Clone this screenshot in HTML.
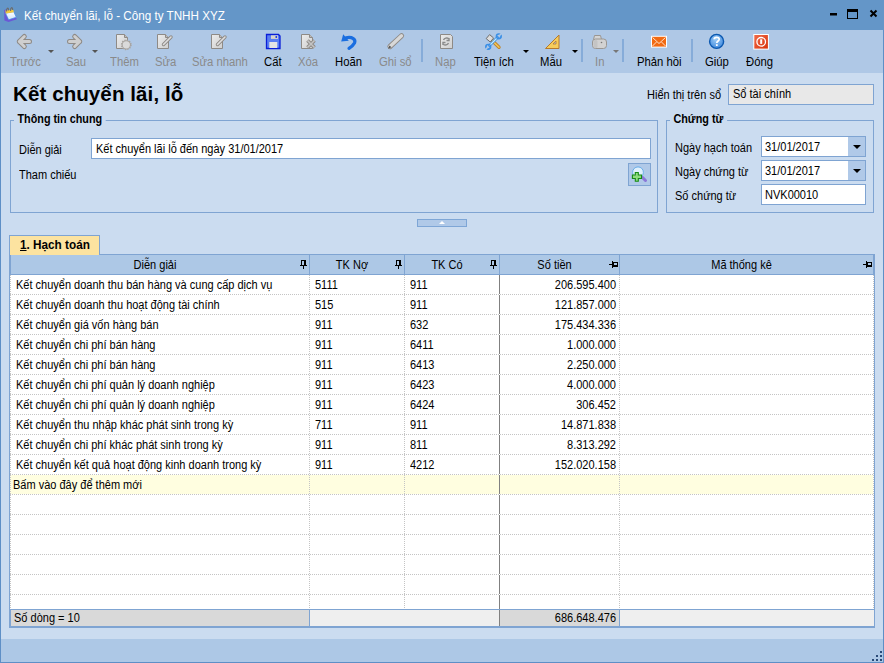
<!DOCTYPE html>
<html><head><meta charset="utf-8">
<style>
*{box-sizing:border-box;margin:0;padding:0}
html,body{width:884px;height:663px;overflow:hidden}
body{position:relative;background:#cbdcf0;font-family:"Liberation Sans",sans-serif;font-size:11px;color:#000}
.a{position:absolute}
.t{position:absolute;white-space:nowrap;line-height:13px;font-size:11px}
.u{position:absolute;white-space:nowrap;line-height:13px;font-size:12px;transform:scaleX(0.917);transform-origin:0 0}
#title{left:0;top:0;width:884px;height:30px;background:#6496c8}
#tb{left:1px;top:30px;width:882px;height:43px;background:#afc8e6}
#wl{left:0;top:30px;width:1px;height:633px;background:#5e8fc6}
#wr{left:883px;top:30px;width:1px;height:633px;background:#5e8fc6}
#wb{left:0;top:662px;width:884px;height:1px;background:#5e8fc6}
#status{left:1px;top:639px;width:882px;height:23px;background:#adc8e6}
.tl{position:absolute;white-space:nowrap;font-size:12px;line-height:14px;top:55px;color:#000;transform:scaleX(0.94);transform-origin:0 0}
.dis{color:#8a8a8a}
.sep{position:absolute;top:39px;width:2px;height:23px;background:#86acd9}
.dd{position:absolute;top:50px;width:0;height:0;border-left:3px solid transparent;border-right:3px solid transparent;border-top:3px solid #000}
.fs{position:absolute;border:1px solid #7fa4d2}
.lg{position:absolute;background:#cbdcf0;font-weight:bold;font-size:12.5px;line-height:14px;padding:0 4px 0 4px;white-space:nowrap;transform:scaleX(0.865);transform-origin:0 0}
.inp{position:absolute;background:#fff;border:1px solid #7fa4d2}
.ddb{position:absolute;background:#b0c9e8}
.ddb:after{content:"";position:absolute;left:4.5px;top:8px;border-left:4px solid transparent;border-right:4px solid transparent;border-top:4px solid #000}
#grid{left:9px;top:255px;width:866px;height:372px;background:#fff;border:1px solid #7fa4d2}
.hd{position:absolute;top:0;height:19px;background:#adc8e6;border-right:1px solid #7fa4d2;border-bottom:1px solid #7fa4d2}
.hl{position:absolute;left:0;right:0;top:3px;text-align:center;line-height:13px;white-space:nowrap}
.hr{position:absolute;height:1px;background:repeating-linear-gradient(to right,#c4c4c4 0 1px,transparent 1px 2px)}
.vr{position:absolute;width:1px;background:repeating-linear-gradient(to bottom,#c4c4c4 0 1px,transparent 1px 2px)}
</style></head><body>
<div id="title" class="a"></div>
<div id="tb" class="a"></div>
<div id="status" class="a"></div>
<div id="wl" class="a"></div><div id="wr" class="a"></div><div id="wb" class="a"></div>

<!-- title text -->
<div class="t" style="left:24px;top:9px;color:#fff;font-size:12.5px;line-height:15px;transform:scaleX(0.934);transform-origin:0 0">Kết chuyển lãi, lỗ - Công ty TNHH XYZ</div>

<!-- toolbar labels -->
<div class="tl dis" style="left:10px">Trước</div>
<div class="tl dis" style="left:66px">Sau</div>
<div class="tl dis" style="left:110px">Thêm</div>
<div class="tl dis" style="left:155px">Sửa</div>
<div class="tl dis" style="left:192px">Sửa nhanh</div>
<div class="tl" style="left:264px">Cất</div>
<div class="tl dis" style="left:298px">Xóa</div>
<div class="tl" style="left:335px">Hoãn</div>
<div class="tl dis" style="left:379px">Ghi sổ</div>
<div class="tl dis" style="left:435px">Nạp</div>
<div class="tl" style="left:474px">Tiện ích</div>
<div class="tl" style="left:540px">Mẫu</div>
<div class="tl dis" style="left:595px">In</div>
<div class="tl" style="left:637px">Phản hồi</div>
<div class="tl" style="left:705px">Giúp</div>
<div class="tl" style="left:746px">Đóng</div>
<div class="dd" style="left:48px;border-top-color:#555"></div>
<div class="dd" style="left:92px;border-top-color:#555"></div>
<div class="dd" style="left:523px"></div>
<div class="dd" style="left:572px"></div>
<div class="dd" style="left:613px;border-top-color:#777"></div>
<div class="sep" style="left:421px"></div>
<div class="sep" style="left:581px"></div>
<div class="sep" style="left:622px"></div>
<div class="sep" style="left:691px"></div>

<!-- heading -->
<div class="t" style="left:13px;top:82px;font-size:20.5px;line-height:23px;font-weight:bold;letter-spacing:0.1px">Kết chuyển lãi, lỗ</div>
<div class="u" style="left:647px;top:89px">Hiển thị trên sổ</div>
<div class="a" style="left:728px;top:84px;width:146px;height:21px;background:#e8e8e8;border:1px solid #7fa4d2"></div>
<div class="u" style="left:733px;top:88px">Sổ tài chính</div>

<!-- fieldset 1 -->
<div class="fs" style="left:10px;top:120px;width:648px;height:93px"></div>
<div class="lg" style="left:13.5px;top:112px">Thông tin chung</div>
<div class="u" style="left:19px;top:144px">Diễn giải</div>
<div class="u" style="left:19px;top:169px">Tham chiếu</div>
<div class="inp" style="left:91px;top:138px;width:560px;height:21px"></div>
<div class="u" style="left:96px;top:143px">Kết chuyển lãi lỗ đến ngày 31/01/2017</div>
<div class="a" style="left:628px;top:163px;width:23px;height:23px;background:#b0c9e8;border:1px solid #7fa4d2"></div>

<!-- fieldset 2 -->
<div class="fs" style="left:666px;top:120px;width:208px;height:93px"></div>
<div class="lg" style="left:669.5px;top:112px">Chứng từ</div>
<div class="u" style="left:675px;top:142px">Ngày hạch toán</div>
<div class="u" style="left:675px;top:166px">Ngày chứng từ</div>
<div class="u" style="left:675px;top:190px">Số chứng từ</div>
<div class="inp" style="left:761px;top:136px;width:105px;height:21px"></div>
<div class="ddb" style="left:848px;top:137px;width:17px;height:19px"></div>
<div class="u" style="left:765px;top:141px">31/01/2017</div>
<div class="inp" style="left:761px;top:160px;width:105px;height:21px"></div>
<div class="ddb" style="left:848px;top:161px;width:17px;height:19px"></div>
<div class="u" style="left:765px;top:165px">31/01/2017</div>
<div class="inp" style="left:761px;top:184px;width:105px;height:21px"></div>
<div class="u" style="left:765px;top:189px">NVK00010</div>

<!-- splitter -->
<div class="a" style="left:417px;top:219px;width:50px;height:8px;background:#b0c9e8;border:1px solid #7ea6d6"></div>
<div class="a" style="left:438.5px;top:221px;width:0;height:0;border-left:3px solid transparent;border-right:3px solid transparent;border-bottom:3px solid #fff"></div>

<!-- tab -->



<div class="a" style="left:9px;top:254px;width:866px;height:373px;background:#fff;border:1px solid #7fa4d2"></div>
<div class="a" style="left:10px;top:255px;width:864px;height:19px;background:#adc8e6"></div>
<div class="a" style="left:10px;top:274px;width:864px;height:1px;background:#7fa4d2"></div>
<div class="a" style="left:10px;top:255px;width:1px;height:19px;background:#7fa4d2"></div>
<div class="a" style="left:309px;top:255px;width:1px;height:19px;background:#7fa4d2"></div>
<div class="u" style="left:10px;width:290px;top:259px;text-align:center;transform-origin:50% 0">Diễn giải</div>
<div class="a" style="left:404px;top:255px;width:1px;height:19px;background:#7fa4d2"></div>
<div class="u" style="left:309px;width:86px;top:259px;text-align:center;transform-origin:50% 0">TK Nợ</div>
<div class="a" style="left:499px;top:255px;width:1px;height:19px;background:#7fa4d2"></div>
<div class="u" style="left:404px;width:86px;top:259px;text-align:center;transform-origin:50% 0">TK Có</div>
<div class="a" style="left:619px;top:255px;width:1px;height:19px;background:#7fa4d2"></div>
<div class="u" style="left:499px;width:111px;top:259px;text-align:center;transform-origin:50% 0">Số tiền</div>
<div class="a" style="left:873px;top:255px;width:1px;height:19px;background:#7fa4d2"></div>
<div class="u" style="left:619px;width:245px;top:259px;text-align:center;transform-origin:50% 0">Mã thống kê</div>
<div class="u" style="left:16px;top:279px;">Kết chuyển doanh thu bán hàng và cung cấp dịch vụ</div>
<div class="u" style="left:315px;top:279px;">5111</div>
<div class="u" style="left:410px;top:279px;">911</div>
<div class="u" style="left:499px;width:117px;top:279px;text-align:right;transform-origin:100% 0">206.595.400</div>
<div class="u" style="left:16px;top:299px;">Kết chuyển doanh thu hoạt động tài chính</div>
<div class="u" style="left:315px;top:299px;">515</div>
<div class="u" style="left:410px;top:299px;">911</div>
<div class="u" style="left:499px;width:117px;top:299px;text-align:right;transform-origin:100% 0">121.857.000</div>
<div class="u" style="left:16px;top:319px;">Kết chuyển giá vốn hàng bán</div>
<div class="u" style="left:315px;top:319px;">911</div>
<div class="u" style="left:410px;top:319px;">632</div>
<div class="u" style="left:499px;width:117px;top:319px;text-align:right;transform-origin:100% 0">175.434.336</div>
<div class="u" style="left:16px;top:339px;">Kết chuyển chi phí bán hàng</div>
<div class="u" style="left:315px;top:339px;">911</div>
<div class="u" style="left:410px;top:339px;">6411</div>
<div class="u" style="left:499px;width:117px;top:339px;text-align:right;transform-origin:100% 0">1.000.000</div>
<div class="u" style="left:16px;top:359px;">Kết chuyển chi phí bán hàng</div>
<div class="u" style="left:315px;top:359px;">911</div>
<div class="u" style="left:410px;top:359px;">6413</div>
<div class="u" style="left:499px;width:117px;top:359px;text-align:right;transform-origin:100% 0">2.250.000</div>
<div class="u" style="left:16px;top:379px;">Kết chuyển chi phí quản lý doanh nghiệp</div>
<div class="u" style="left:315px;top:379px;">911</div>
<div class="u" style="left:410px;top:379px;">6423</div>
<div class="u" style="left:499px;width:117px;top:379px;text-align:right;transform-origin:100% 0">4.000.000</div>
<div class="u" style="left:16px;top:399px;">Kết chuyển chi phí quản lý doanh nghiệp</div>
<div class="u" style="left:315px;top:399px;">911</div>
<div class="u" style="left:410px;top:399px;">6424</div>
<div class="u" style="left:499px;width:117px;top:399px;text-align:right;transform-origin:100% 0">306.452</div>
<div class="u" style="left:16px;top:419px;">Kết chuyển thu nhập khác phát sinh trong kỳ</div>
<div class="u" style="left:315px;top:419px;">711</div>
<div class="u" style="left:410px;top:419px;">911</div>
<div class="u" style="left:499px;width:117px;top:419px;text-align:right;transform-origin:100% 0">14.871.838</div>
<div class="u" style="left:16px;top:439px;">Kết chuyển chi phí khác phát sinh trong kỳ</div>
<div class="u" style="left:315px;top:439px;">911</div>
<div class="u" style="left:410px;top:439px;">811</div>
<div class="u" style="left:499px;width:117px;top:439px;text-align:right;transform-origin:100% 0">8.313.292</div>
<div class="u" style="left:16px;top:459px;">Kết chuyển kết quả hoạt động kinh doanh trong kỳ</div>
<div class="u" style="left:315px;top:459px;">911</div>
<div class="u" style="left:410px;top:459px;">4212</div>
<div class="u" style="left:499px;width:117px;top:459px;text-align:right;transform-origin:100% 0">152.020.158</div>
<div class="a" style="left:10px;top:475px;width:863px;height:19px;background:#fffee0"></div>
<div class="u" style="left:13px;top:479px;">Bấm vào đây để thêm mới</div>
<div class="hr" style="left:10px;top:294px;width:864px"></div>
<div class="hr" style="left:10px;top:314px;width:864px"></div>
<div class="hr" style="left:10px;top:334px;width:864px"></div>
<div class="hr" style="left:10px;top:354px;width:864px"></div>
<div class="hr" style="left:10px;top:374px;width:864px"></div>
<div class="hr" style="left:10px;top:394px;width:864px"></div>
<div class="hr" style="left:10px;top:414px;width:864px"></div>
<div class="hr" style="left:10px;top:434px;width:864px"></div>
<div class="hr" style="left:10px;top:454px;width:864px"></div>
<div class="hr" style="left:10px;top:474px;width:864px"></div>
<div class="hr" style="left:10px;top:494px;width:864px"></div>
<div class="hr" style="left:10px;top:514px;width:864px"></div>
<div class="hr" style="left:10px;top:534px;width:864px"></div>
<div class="hr" style="left:10px;top:554px;width:864px"></div>
<div class="hr" style="left:10px;top:574px;width:864px"></div>
<div class="hr" style="left:10px;top:594px;width:864px"></div>
<div class="vr" style="left:10px;top:275px;height:334px"></div>
<div class="vr" style="left:309px;top:275px;height:334px"></div>
<div class="vr" style="left:404px;top:275px;height:334px"></div>
<div class="vr" style="left:619px;top:275px;height:334px"></div>
<div class="vr" style="left:873px;top:275px;height:334px"></div>
<div class="a" style="left:499px;top:275px;width:1px;height:334px;background:repeating-linear-gradient(to bottom,#808080 0 19px,#fff 19px 20px)"></div>
<div class="a" style="left:499px;top:610px;width:1px;height:16px;background:#808080"></div>
<div class="a" style="left:10px;top:609px;width:864px;height:1px;background:#7fa4d2"></div>
<div class="a" style="left:10px;top:610px;width:299px;height:16px;background:#d9d9d9"></div>
<div class="a" style="left:309px;top:610px;width:1px;height:16px;background:#7fa4d2"></div>
<div class="a" style="left:310px;top:610px;width:189px;height:16px;background:#efefef"></div>
<div class="a" style="left:500px;top:610px;width:119px;height:16px;background:#d9d9d9"></div>
<div class="a" style="left:619px;top:610px;width:1px;height:16px;background:#7fa4d2"></div>
<div class="a" style="left:620px;top:610px;width:254px;height:16px;background:#efefef"></div>
<div class="a" style="left:10px;top:609px;width:1px;height:18px;background:#7fa4d2"></div>
<div class="a" style="left:9px;top:626px;width:866px;height:2px;background:#7fa4d2"></div>
<div class="u" style="left:14px;top:612px;">Số dòng = 10</div>
<div class="u" style="left:499px;width:117px;top:612px;text-align:right;transform-origin:100% 0">686.648.476</div>
<div class="a" style="left:9px;top:235px;width:91px;height:20px;background:#fce3a0;border:1px solid #7fa4d2;border-bottom:none"></div>
<div class="t" style="left:20px;top:238px;font-weight:bold;font-size:12.5px;line-height:14px;transform:scaleX(0.94);transform-origin:0 0"><u>1</u>. Hạch toán</div>

<svg class="a" style="left:0;top:0" width="884" height="663" viewBox="0 0 884 663">
<defs>
<linearGradient id="gdoc" x1="0" y1="0" x2="1" y2="1"><stop offset="0" stop-color="#ececec"/><stop offset="1" stop-color="#cfcfcf"/></linearGradient>
<linearGradient id="gcal" x1="0" y1="0" x2="0" y2="1"><stop offset="0" stop-color="#ffffff"/><stop offset="1" stop-color="#cfe3fb"/></linearGradient>
<radialGradient id="ghelp" cx="0.45" cy="0.35" r="0.7"><stop offset="0" stop-color="#9ccbf6"/><stop offset="1" stop-color="#3a86dc"/></radialGradient>
<linearGradient id="gred" x1="0" y1="0" x2="1" y2="1"><stop offset="0" stop-color="#f06a48"/><stop offset="1" stop-color="#d8340c"/></linearGradient>
</defs>
<!-- title calendar icon -->
<path d="M4.2,10 L6.5,9.3 L15.5,16 L16.8,19.2 L8.5,21.9 L4.4,20.6 Z" fill="#6b58d6"/>
<path d="M5.6,13.2 L13.6,11.6 L16.3,17.2 L8.6,19.8 Z" fill="url(#gcal)" stroke="#3f8ee6" stroke-width="0.7"/>
<path d="M5.3,10.6 L13.1,9.4 L13.9,12.3 L5.8,13.6 Z" fill="#f4c93a"/>
<path d="M6.6,11.5 C6.2,7.8 8.6,6.6 8.7,10.5 M10.6,11 C10.2,7.3 12.6,6.3 12.7,10.1" fill="none" stroke="#6c6c6c" stroke-width="1.1"/>
<!-- window controls -->
<rect x="830" y="13" width="7" height="2.5" fill="#000"/>
<rect x="847.5" y="9.5" width="10" height="9" fill="none" stroke="#000" stroke-width="1"/>
<rect x="847" y="9" width="11" height="3" fill="#000"/>
<path d="M870.5,10.5 L876.5,16.5 M876.5,10.5 L870.5,16.5" stroke="#000" stroke-width="2"/>
<!-- back arrow -->
<g fill="none" stroke-linecap="round" stroke-linejoin="round">
<path d="M24.3,36.5 L19.3,41.5 L24.3,46.5 M19.3,41.5 L29.5,41.5" stroke="#8e8a86" stroke-width="5"/>
<path d="M24.3,36.5 L19.3,41.5 L24.3,46.5 M19.3,41.5 L29.5,41.5" stroke="#cfcfcf" stroke-width="3"/>
<path d="M74.7,36.5 L79.7,41.5 L74.7,46.5 M79.7,41.5 L69.5,41.5" stroke="#8e8a86" stroke-width="5"/>
<path d="M74.7,36.5 L79.7,41.5 L74.7,46.5 M79.7,41.5 L69.5,41.5" stroke="#cfcfcf" stroke-width="3"/>
</g>
<!-- Them doc with gear -->
<path d="M116.5,34.5 L124.5,34.5 L127.5,37.5 L127.5,48.5 L116.5,48.5 Z" fill="url(#gdoc)" stroke="#8e8a86"/>
<path d="M124.5,34.5 L124.5,37.5 L127.5,37.5" fill="#bdbdbd" stroke="#8e8a86"/>
<circle cx="126.3" cy="44.8" r="4.6" fill="#a8a4a0" stroke="#a8a4a0" stroke-width="1.6" stroke-dasharray="1.3 1.1"/><circle cx="126.3" cy="44.8" r="3.6" fill="#dadada"/>
<!-- Sua doc pencil -->
<path d="M157.5,34.5 L165.5,34.5 L168.5,37.5 L168.5,48.5 L157.5,48.5 Z" fill="url(#gdoc)" stroke="#8e8a86"/>
<path d="M165.5,34.5 L165.5,37.5 L168.5,37.5" fill="#bdbdbd" stroke="#8e8a86"/>
<path d="M163.5,44.5 L171,37" stroke="#8e8a86" stroke-width="3.4" stroke-linecap="round"/>
<path d="M163.5,44.5 L171,37" stroke="#dedede" stroke-width="1.6" stroke-linecap="round"/>
<!-- Sua nhanh -->
<path d="M211.5,34.5 L219.5,34.5 L222.5,37.5 L222.5,48.5 L211.5,48.5 Z" fill="url(#gdoc)" stroke="#8e8a86"/>
<path d="M219.5,34.5 L219.5,37.5 L222.5,37.5" fill="#bdbdbd" stroke="#8e8a86"/>
<path d="M217.5,44.5 L225,37" stroke="#8e8a86" stroke-width="3.4" stroke-linecap="round"/>
<path d="M217.5,44.5 L225,37" stroke="#dedede" stroke-width="1.6" stroke-linecap="round"/>
<!-- Cat floppy -->
<path d="M266.5,34.5 L278.5,34.5 L280,36 L280,48.5 L266.5,48.5 Z" fill="#5a7ef2" stroke="#0a1ed8" stroke-width="1.3"/>
<rect x="271" y="35.3" width="7" height="3.6" fill="#d8d4cc"/>
<rect x="275.5" y="36" width="1.6" height="2" fill="#2040e8"/>
<rect x="269.3" y="42" width="8" height="6" fill="#e4e4e4"/>
<!-- Xoa doc X -->
<path d="M301.5,34.5 L309.5,34.5 L312.5,37.5 L312.5,48.5 L301.5,48.5 Z" fill="url(#gdoc)" stroke="#8e8a86"/>
<path d="M309.5,34.5 L309.5,37.5 L312.5,37.5" fill="#bdbdbd" stroke="#8e8a86"/>
<path d="M307.5,40.5 L314.5,47.5 M314.5,40.5 L307.5,47.5" stroke="#8e8a86" stroke-width="3.6"/>
<path d="M307.5,40.5 L314.5,47.5 M314.5,40.5 L307.5,47.5" stroke="#c4c4c4" stroke-width="1.6"/>
<!-- Hoan undo -->
<path d="M346,37.8 C352.5,36.5 356,39.5 354.5,43 C353.5,45 351,47 349,48.3" fill="none" stroke="#1a6ee0" stroke-width="3.2" stroke-linecap="round"/>
<path d="M341.2,41.5 L343.2,34.2 L348.8,40.8 Z" fill="#1a6ee0"/>
<!-- Ghi so pencil -->
<path d="M390,46.5 L401.5,35.8" stroke="#8e8a86" stroke-width="5.2" stroke-linecap="round"/>
<path d="M390,46.5 L401.5,35.8" stroke="#d8d8d8" stroke-width="3.4" stroke-linecap="round"/>
<path d="M388,48.8 L389.5,45.5 L391.5,47.3 Z" fill="#555"/>
<!-- Nap doc refresh -->
<path d="M440.5,34.5 L450.5,34.5 L452.5,36.5 L452.5,48.5 L440.5,48.5 Z" fill="url(#gdoc)" stroke="#8e8a86"/>
<path d="M443.5,40 C444.5,38 447,37.5 448.5,38.5 M449,38 L449,40.5 L446.5,40.5" fill="none" stroke="#8a8a8a" stroke-width="1.4"/>
<path d="M448.5,43 C447.5,45 445,45.5 443.5,44.5 M443,45 L443,42.5 L445.5,42.5" fill="none" stroke="#8a8a8a" stroke-width="1.4"/>
<!-- Tien ich tools -->
<path d="M492,40.5 L499,47.3" stroke="#c0852a" stroke-width="3.4" stroke-linecap="round"/>
<path d="M492,40.5 L499,47.3" stroke="#f2c85a" stroke-width="1.4" stroke-linecap="round"/>
<path d="M486.2,38.6 L489.6,34.6 L493.6,38 L490.2,42 Z" fill="#dcdcdc" stroke="#6e6e6e" stroke-width="1"/>
<path d="M489.5,45.5 L497.5,37.5" stroke="#3a8fe6" stroke-width="2.8" stroke-linecap="round"/>
<path d="M489.5,45.5 L497.5,37.5" stroke="#c4ecff" stroke-width="1.1" stroke-linecap="round"/>
<circle cx="498.8" cy="36.3" r="2.3" fill="none" stroke="#3a8fe6" stroke-width="1.7"/>
<circle cx="488.2" cy="46.8" r="2.3" fill="none" stroke="#3a8fe6" stroke-width="1.7"/>
<path d="M499.5,35.5 L502,33" stroke="#afc8e6" stroke-width="1.6"/>
<path d="M487.5,47.5 L485,50" stroke="#afc8e6" stroke-width="1.6"/>
<!-- Mau triangle ruler -->
<path d="M545.5,48.5 L559,35 L559,48.5 Z" fill="#f6cc5c" stroke="#b57a2e" stroke-width="1"/>
<path d="M553,44 L556,41 L556,44 Z" fill="#afc8e6" stroke="#b57a2e" stroke-width="0.8"/>
<!-- In printer -->
<path d="M593.5,39.5 L594.5,35.5 L600.5,35.5 L601.5,39.5 Z" fill="#d4d4d4" stroke="#9a9692"/>
<rect x="592.5" y="39" width="14" height="9.5" rx="3" fill="#d2d2d2" stroke="#9a9692"/>
<rect x="593.5" y="40" width="4" height="8" rx="1.5" fill="#c4c4c4"/>
<circle cx="601.5" cy="42.5" r="0.8" fill="#777"/>
<!-- Phan hoi envelope -->
<rect x="651" y="35.8" width="16" height="11.8" fill="#fff"/>
<rect x="652" y="36.8" width="14" height="9.8" fill="#f26a12"/>
<path d="M652.5,37.5 L659,43.5 L665.5,37.5 M652.5,46 L656.5,42 M665.5,46 L661.5,42" fill="none" stroke="#ffe0c8" stroke-width="1"/>
<!-- Giup help -->
<circle cx="716.6" cy="41.4" r="7" fill="url(#ghelp)" stroke="#0b58b0" stroke-width="1.4"/>
<path d="M714.2,39.3 C714.2,36.8 719.2,36.6 719.2,39.3 C719.2,41 716.8,41 716.8,43" fill="none" stroke="#fff" stroke-width="1.7"/>
<rect x="715.9" y="44.2" width="1.8" height="1.8" fill="#fff"/>
<!-- Dong close -->
<rect x="753.3" y="34" width="15.6" height="15.6" fill="#fff"/>
<rect x="754.3" y="35" width="13.6" height="13.6" fill="url(#gred)"/>
<circle cx="761.2" cy="41.8" r="4.3" fill="none" stroke="#fff" stroke-width="1.3"/>
<rect x="760.2" y="39.3" width="2" height="4.6" fill="#fff"/>
<!-- search plus button icon -->
<path d="M642,177 L645.5,180.5" stroke="#8a78d8" stroke-width="3" stroke-linecap="round"/>
<circle cx="638" cy="172.3" r="5.4" fill="#dff0fc" stroke="#6aaee8" stroke-width="1"/>
<path d="M635.3,172.5 H638.3 V175 H641.5 V178.5 H638.3 V181.3 H635.3 V178.5 H632.4 V175 H635.3 Z" fill="#8fdc7e" stroke="#168a16" stroke-width="1.1"/>
<!-- grid pins -->
<rect x="301.5" y="260.5" width="4" height="5" fill="none" stroke="#000"/><rect x="304" y="260" width="2" height="6" fill="#000"/><rect x="300" y="265" width="7" height="1" fill="#000"/><rect x="303" y="266" width="1" height="3" fill="#000"/>
<rect x="396.5" y="260.5" width="4" height="5" fill="none" stroke="#000"/><rect x="399" y="260" width="2" height="6" fill="#000"/><rect x="395" y="265" width="7" height="1" fill="#000"/><rect x="398" y="266" width="1" height="3" fill="#000"/>
<rect x="491.5" y="260.5" width="4" height="5" fill="none" stroke="#000"/><rect x="494" y="260" width="2" height="6" fill="#000"/><rect x="490" y="265" width="7" height="1" fill="#000"/><rect x="493" y="266" width="1" height="3" fill="#000"/>
<rect x="609" y="264" width="3" height="1" fill="#000"/><rect x="612" y="261" width="1" height="7" fill="#000"/><rect x="613.5" y="262.5" width="4" height="4" fill="none" stroke="#000"/><rect x="613" y="265" width="5" height="2" fill="#000"/>
<rect x="863" y="264" width="3" height="1" fill="#000"/><rect x="866" y="261" width="1" height="7" fill="#000"/><rect x="867.5" y="262.5" width="4" height="4" fill="none" stroke="#000"/><rect x="867" y="265" width="5" height="2" fill="#000"/>
<rect x="880" y="651" width="2" height="2" fill="#2a4a78"/><rect x="876" y="655" width="2" height="2" fill="#2a4a78"/><rect x="880" y="655" width="2" height="2" fill="#2a4a78"/><rect x="872" y="659" width="2" height="2" fill="#2a4a78"/><rect x="876" y="659" width="2" height="2" fill="#2a4a78"/><rect x="880" y="659" width="2" height="2" fill="#2a4a78"/>
</svg>

</body></html>
